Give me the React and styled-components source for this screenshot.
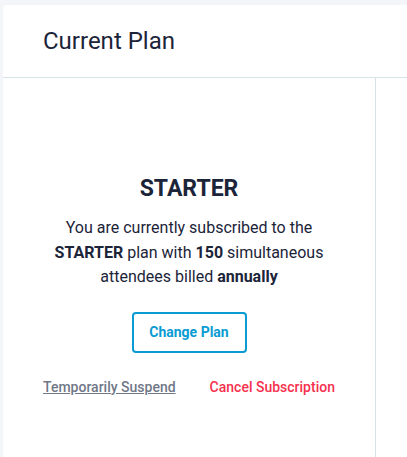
import React from 'react';
import styled, { createGlobalStyle } from 'styled-components';

const Global = createGlobalStyle`
  html, body {
    margin: 0;
    padding: 0;
    background: #f4f5f8;
    overflow: hidden;
  }
  body {
    font-family: Roboto, 'Liberation Sans', sans-serif;
    color: #1c2439;
  }
`;

const Page = styled.div`
  padding: 5px 0 0 3px;
  height: 457px;
  box-sizing: border-box;
  overflow: hidden;
`;

const Card = styled.div`
  width: 640px;
  height: 600px;
  background: #fff;
  border-radius: 4px 0 0 0;
  display: flex;
  flex-direction: column;
`;

const Header = styled.div`
  height: 73px;
  flex: none;
  box-sizing: border-box;
  border-bottom: 1px solid #d6e2ea;
  display: flex;
  align-items: center;
  padding-left: 40px;
  padding-bottom: 1px;
`;

const Title = styled.h2`
  margin: 0;
  font-size: 24px;
  font-weight: 400;
  color: #1c2439;
`;

const Columns = styled.div`
  flex: 1;
  display: grid;
  grid-template-columns: 373px 1fr;
`;

const PlanColumn = styled.div`
  border-right: 1px solid #d6e2ea;
  display: flex;
  flex-direction: column;
  align-items: center;
  padding-top: 97px;
`;

const PlanName = styled.h3`
  margin: 0;
  font-size: 23px;
  line-height: 28px;
  font-weight: 700;
`;

const Summary = styled.p`
  margin: 13px 0 0;
  width: 290px;
  text-align: center;
  font-size: 16px;
  line-height: 24.5px;
  color: #1c2439;

  strong {
    font-weight: 700;
  }
`;

const ChangeButton = styled.button`
  margin-top: 22px;
  width: 115px;
  height: 41px;
  border: 2px solid #0a9bd3;
  border-radius: 4px;
  background: #fff;
  color: #0a9bd3;
  font-family: Roboto, 'Liberation Sans', sans-serif;
  font-size: 14px;
  font-weight: 700;
  cursor: pointer;
`;

const Actions = styled.div`
  margin-top: 26px;
  display: flex;
  gap: 34px;
  font-size: 14px;
  font-weight: 500;
`;

const ActionLink = styled.a`
  color: ${p => (p.$danger ? '#f5314e' : '#707888')};
  text-decoration: ${p => (p.$danger ? 'none' : 'underline')};
  cursor: pointer;
`;

export default function App() {
  return (
    <>
      <Global />
      <Page>
        <Card>
          <Header>
            <Title>Current Plan</Title>
          </Header>
          <Columns>
            <PlanColumn>
              <PlanName>STARTER</PlanName>
              <Summary>
                You are currently subscribed to the <strong>STARTER</strong> plan with{' '}
                <strong>150</strong> simultaneous attendees billed <strong>annually</strong>
              </Summary>
              <ChangeButton>Change Plan</ChangeButton>
              <Actions>
                <ActionLink>Temporarily Suspend</ActionLink>
                <ActionLink $danger>Cancel Subscription</ActionLink>
              </Actions>
            </PlanColumn>
            <div />
          </Columns>
        </Card>
      </Page>
    </>
  );
}
